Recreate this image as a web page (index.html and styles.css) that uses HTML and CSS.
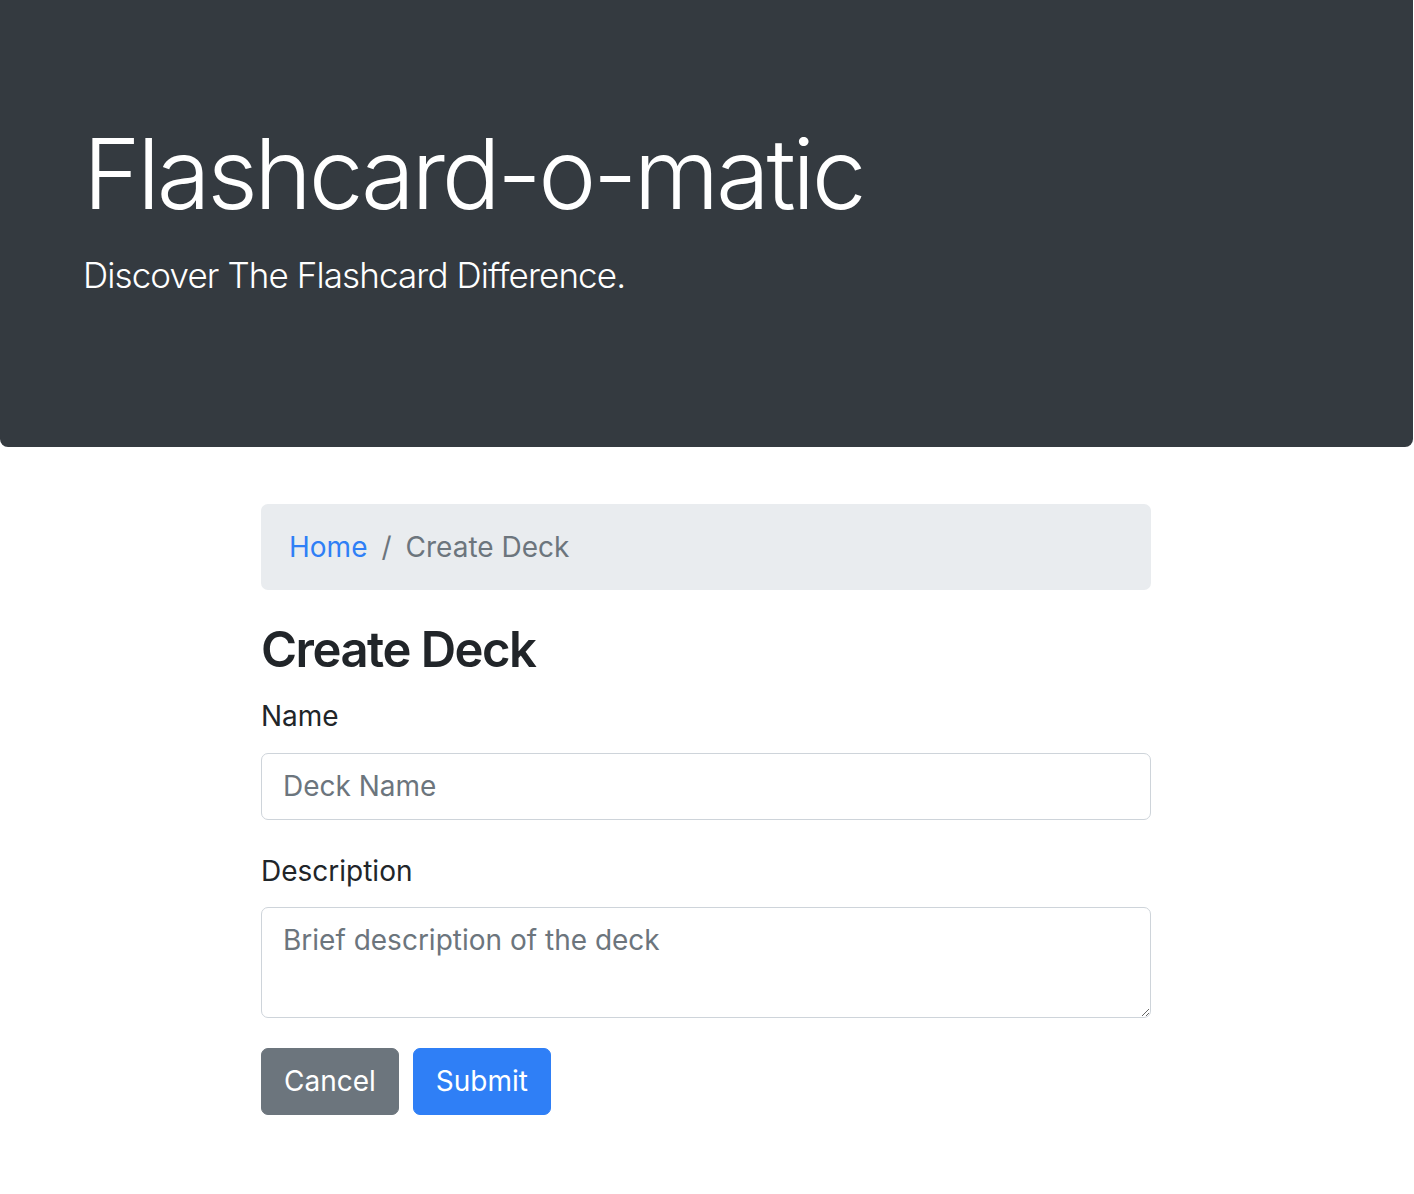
FILE: index.html
```html
<!DOCTYPE html>
<html lang="en">
<head>
<meta charset="utf-8">
<title>Flashcard-o-matic</title>
<link rel="stylesheet" href="styles.css">
</head>
<body>
<div class="page">
  <header class="jumbotron">
    <div class="jumbo-inner">
      <h1 class="display">Flashcard-o-matic</h1>
      <p class="lead">Discover The Flashcard Difference.</p>
    </div>
  </header>
  <main class="main">
    <div class="container">
      <nav class="breadcrumb">
        <a class="crumb-link" href="#">Home</a>
        <span class="crumb-sep">/</span>
        <span class="crumb-active">Create Deck</span>
      </nav>
      <h3 class="heading">Create Deck</h3>
      <form class="deck-form">
        <div class="form-group">
          <label class="form-label" for="name">Name</label>
          <input class="form-control" id="name" type="text" placeholder="Deck Name">
        </div>
        <div class="form-group">
          <label class="form-label" for="description">Description</label>
          <textarea class="form-control form-textarea" id="description" placeholder="Brief description of the deck"></textarea>
        </div>
        <div class="actions">
          <button type="button" class="btn btn-secondary">Cancel</button>
          <button type="submit" class="btn btn-primary">Submit</button>
        </div>
      </form>
    </div>
  </main>
</div>
</body>
</html>
```
FILE: styles.css
```css
* { box-sizing: border-box; }
html, body {
  margin: 0;
  padding: 0;
  background: #ffffff;
}
body {
  font-family: Inter, "Liberation Sans", sans-serif;
  font-size: 28px;
  line-height: 42px;
  color: #212529;
}
.page {
  margin-right: 1px;
}
.jumbotron {
  background: #343a40;
  color: #ffffff;
  padding: 115px 56px 118px;
  border-radius: 0 0 8px 8px;
}
.jumbo-inner {
  padding: 0 27px;
}
.display {
  margin: 0 0 16px;
  font-size: 98px;
  font-weight: 300;
  line-height: 117.6px;
  letter-spacing: -3.4px;
}
.lead {
  margin: 0 0 28px;
  font-size: 35px;
  font-weight: 300;
  line-height: 52.5px;
  letter-spacing: -0.9px;
}
.main {
  padding-right: 1px;
}
.container {
  width: 890px;
  margin: 57px auto 0;
}
.breadcrumb {
  display: flex;
  align-items: center;
  background: #e9ecef;
  border-radius: 7px;
  padding: 22px 28px;
  margin-bottom: 31px;
}
.crumb-link {
  color: #2f7ff6;
  text-decoration: none;
}
.crumb-sep {
  color: #6c757d;
  padding: 0 14px;
}
.crumb-active {
  color: #6c757d;
}
.heading {
  margin: 0 0 15.4px;
  font-size: 49px;
  font-weight: 600;
  line-height: 58.8px;
  letter-spacing: -1.5px;
}
.deck-form {
  margin: 0;
}
.form-group {
  margin-bottom: 30px;
}
.form-label {
  display: block;
  margin-bottom: 15.7px;
}
.form-control {
  display: block;
  width: 100%;
  height: 66.8px;
  padding: 10.5px 21px;
  font-family: inherit;
  font-size: 28px;
  line-height: 42px;
  color: #495057;
  background: #ffffff;
  border: 1px solid #ced4da;
  border-radius: 7px;
  outline: none;
}
.form-control::placeholder {
  color: #6c757d;
  opacity: 1;
}
.form-textarea {
  height: 110.5px;
  resize: vertical;
}
.actions {
  display: flex;
  gap: 14px;
}
.btn {
  font-family: inherit;
  font-size: 28px;
  line-height: 42px;
  padding: 11.5px 22px;
  border: 1px solid transparent;
  border-radius: 7px;
  color: #ffffff;
  cursor: pointer;
}
.btn-secondary {
  background: #6c757d;
  border-color: #6c757d;
}
.btn-primary {
  background: #2f7ff6;
  border-color: #2f7ff6;
}
```
